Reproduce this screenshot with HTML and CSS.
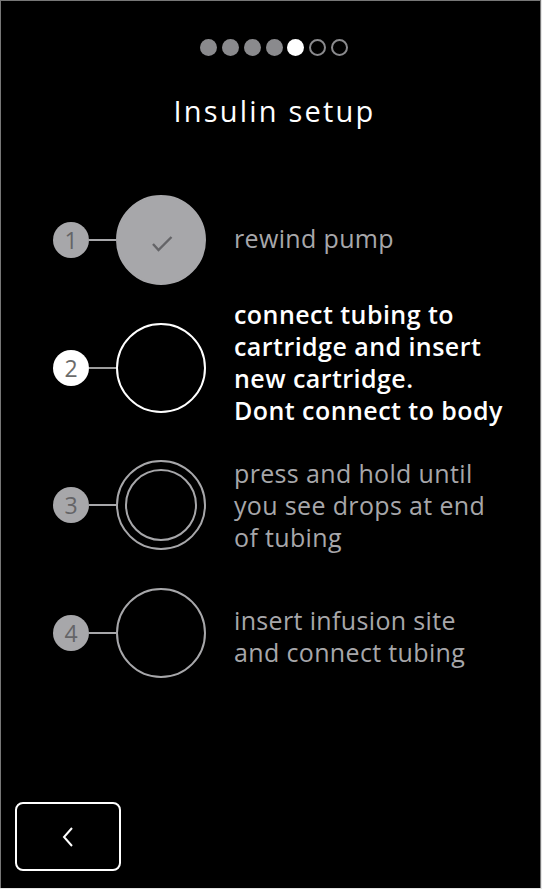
FILE: index.html
```html
<!DOCTYPE html>
<html>
<head>
<meta charset="utf-8">
<link rel="stylesheet" href="styles.css">
</head>
<body>
<div class="screen">
  <div class="dots">
    <span class="dot done"></span>
    <span class="dot done"></span>
    <span class="dot done"></span>
    <span class="dot done"></span>
    <span class="dot current"></span>
    <span class="dot todo"></span>
    <span class="dot todo"></span>
  </div>
  <h1 class="title">Insulin setup</h1>
  <div class="steps">
    <div class="step step-done">
      <div class="num">1</div>
      <div class="link"></div>
      <div class="ring">
        <svg class="check" width="24" height="20" viewBox="0 0 24 20"><path d="M4 11 L9.5 17 L22.5 4" fill="none" stroke="#646467" stroke-width="2.4"/></svg>
      </div>
      <div class="label">rewind pump</div>
    </div>
    <div class="step step-active">
      <div class="num">2</div>
      <div class="link"></div>
      <div class="ring"></div>
      <div class="label">connect tubing to<br>cartridge and insert<br>new cartridge.<br>Dont connect to body</div>
    </div>
    <div class="step step-hold">
      <div class="num">3</div>
      <div class="link"></div>
      <div class="ring"><div class="inner"></div></div>
      <div class="label">press and hold until<br>you see drops at end<br>of tubing</div>
    </div>
    <div class="step step-todo">
      <div class="num">4</div>
      <div class="link"></div>
      <div class="ring"></div>
      <div class="label">insert infusion site<br>and connect tubing</div>
    </div>
  </div>
  <button class="back" type="button">
    <svg width="14" height="22" viewBox="0 0 14 22"><path d="M11 2 L3 11 L11 20" fill="none" stroke="#fff" stroke-width="2"/></svg>
  </button>
</div>
</body>
</html>
```

FILE: styles.css
```css
html, body {
  margin: 0;
  padding: 0;
  background: #e6e6e6;
}

.screen {
  box-sizing: border-box;
  width: 541px;
  height: 888px;
  background: #000;
  border: 1px solid #777;
  border-bottom: none;
  display: flex;
  flex-direction: column;
  padding-top: 38px;
  padding-bottom: 17px;
  font-family: "Open Sans", "Liberation Sans", sans-serif;
}

.dots {
  display: flex;
  justify-content: center;
  gap: 4.7px;
  padding-left: 7px;
  height: 17px;
}

.dot {
  box-sizing: border-box;
  width: 17px;
  height: 17px;
  border-radius: 50%;
}

.dot.done { background: #8a8a8d; }
.dot.current { background: #fff; }
.dot.todo { border: 2px solid #8a8a8d; }

.title {
  margin: 36px 0 0;
  padding-left: 8px;
  text-align: center;
  color: #fff;
  font-size: 29px;
  line-height: 38px;
  font-weight: 500;
  letter-spacing: 2.2px;
}

.steps {
  margin-top: 46px;
  display: flex;
  flex-direction: column;
}

.step {
  height: 128px;
  display: flex;
  align-items: center;
  padding-left: 52px;
}

.step-hold { margin-top: 9px; }

.num {
  box-sizing: border-box;
  width: 36px;
  height: 36px;
  border-radius: 50%;
  background: #a7a7aa;
  color: #646467;
  font-size: 23px;
  font-weight: 400;
  line-height: 36px;
  text-align: center;
  flex: none;
}

.link {
  width: 27px;
  height: 2px;
  background: #a7a7aa;
  flex: none;
}

.ring {
  box-sizing: border-box;
  width: 90px;
  height: 90px;
  border-radius: 50%;
  border: 2px solid #a7a7aa;
  display: flex;
  align-items: center;
  justify-content: center;
  flex: none;
}

.step-done .ring {
  background: #a7a7aa;
}

.check {
  margin-top: 6px;
}

.step-active .num {
  background: #fff;
  color: #6b6b6b;
}

.step-active .link {
  background: #9c9c9c;
}

.step-active .ring {
  border-color: #fff;
}

.inner {
  box-sizing: border-box;
  width: 72px;
  height: 72px;
  border-radius: 50%;
  border: 2px solid #a7a7aa;
}

.label {
  margin-left: 28px;
  white-space: nowrap;
  color: #a7a7aa;
  font-size: 25px;
  line-height: 32px;
  letter-spacing: 0.35px;
}

.step-done .label { padding-bottom: 4px; }

.step-active .label {
  color: #fff;
  font-weight: 600;
  letter-spacing: 0.45px;
  padding-bottom: 12px;
}

.step-todo .label { padding-top: 6px; }

.back {
  margin-top: auto;
  margin-left: 14px;
  align-self: flex-start;
  width: 106px;
  height: 69px;
  box-sizing: border-box;
  border: 2px solid #fff;
  border-radius: 8px;
  background: #000;
  display: flex;
  align-items: center;
  justify-content: center;
  padding: 0;
  cursor: pointer;
}
```
